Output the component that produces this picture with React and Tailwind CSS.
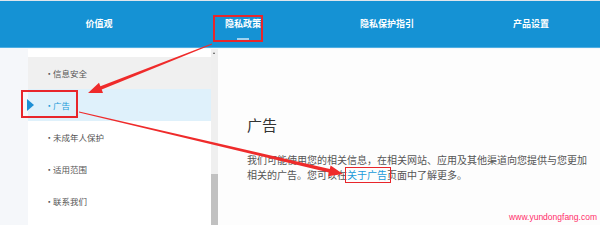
import React from 'react';

const navItems = ['价值观', '隐私政策', '隐私保护指引', '产品设置'];

const sideItems = [
  { label: '信息安全', tone: 'gray' },
  { label: '广告', tone: 'active' },
  { label: '未成年人保护' },
  { label: '适用范围' },
  { label: '联系我们' },
];

// tapered annotation arrow, thin at the start and thick near the head
const arrowPoints = (x1, y1, x2, y2, w0 = 0.4, w1 = 1.8, hl = 14, hw = 5.5) => {
  const dx = x2 - x1;
  const dy = y2 - y1;
  const len = Math.hypot(dx, dy);
  const ux = dx / len;
  const uy = dy / len;
  const px = -uy;
  const py = ux;
  const bx = x2 - ux * hl;
  const by = y2 - uy * hl;
  const pts = [
    [x1 + px * w0, y1 + py * w0],
    [bx + px * w1, by + py * w1],
    [bx + px * hw, by + py * hw],
    [x2, y2],
    [bx - px * hw, by - py * hw],
    [bx - px * w1, by - py * w1],
    [x1 - px * w0, y1 - py * w0],
  ];
  return pts.map(p => p.map(v => v.toFixed(1)).join(',')).join(' ');
};

const App = () => {
  return (
    <div className="relative w-[600px] h-[225px] overflow-hidden bg-[#f5f7fa] font-['Noto_Sans_CJK_SC',sans-serif]">
      {/* Header */}
      <div className="h-px bg-[#dfe5ec]" />
      <header className="h-[47px] bg-[#1592d4] border-b border-[#4eaee2] pl-[27px]">
        <nav className="grid grid-cols-[repeat(4,144px)] h-full">
          {navItems.map((item, i) => (
            <div key={item} className="relative flex items-center justify-center pb-[1px]">
              <span className="text-[9px] font-bold text-white leading-none">{item}</span>
              {i === 1 && (
                <>
                  <span className="absolute left-1/2 -translate-x-1/2 top-[37px] w-[12px] h-[1.5px] bg-[#9fd3f0]" />
                  {/* annotation box */}
                  <span className="absolute left-[42px] top-[14px] w-[50px] h-[27px] border-2 border-[#e8262b]" />
                </>
              )}
            </div>
          ))}
        </nav>
      </header>

      <div className="flex mt-px">
        {/* Sidebar */}
        <div className="relative ml-[28px] flex w-[190px] h-[176px] bg-white">
          <div className="relative w-[183px]">
            <div className="h-[8px]" />
            {sideItems.map(item => (
              <div
                key={item.label}
                className={
                  'relative flex items-center h-[32px] pl-[17px] text-[8.5px] ' +
                  (item.tone === 'gray'
                    ? 'bg-[#f0f0f0] text-[#555]'
                    : item.tone === 'active'
                    ? 'bg-[#dff1fb] text-[#1a9ad9]'
                    : 'text-[#555]')
                }
              >
                {item.tone === 'active' && (
                  <>
                    <span className="absolute -left-px top-[10px] w-0 h-0 border-t-[6px] border-b-[6px] border-l-[7px] border-t-transparent border-b-transparent border-l-[#1d8fd5]" />
                    <span className="absolute -left-[7px] top-px w-[57px] h-[28px] border-2 border-[#e8262b]" />
                  </>
                )}
                <span className="w-[8px]">·</span>
                <span>{item.label}</span>
              </div>
            ))}
          </div>
          {/* scrollbar */}
          <div className="relative w-[7px] bg-[#efefef]">
            <span className="absolute left-[2px] top-[3px] w-0 h-0 border-l-[1.5px] border-r-[1.5px] border-b-[2px] border-l-transparent border-r-transparent border-b-[#555]" />
            <div className="absolute left-0 right-0 top-[125px] bottom-0 bg-[#c1c1c1]" />
          </div>
        </div>

        {/* Main */}
        <main className="flex-1 bg-[#fdfdfd] pl-[29px] pt-[66px]">
          <h1 className="text-[15px] leading-[20px] text-[#333]">广告</h1>
          <p className="mt-[17px] w-[340px] text-[10px] leading-[15px] text-[#555]">
            我们可能使用您的相关信息，在相关网站、应用及其他渠道向您提供与您更加相关的广告。您可以在
            <span className="relative text-[#1a9ad9]">
              关于广告
              <span className="absolute -left-[2px] -right-[4px] top-0 bottom-[-1px] border-[1.5px] border-[#e8262b]" />
            </span>
            页面中了解更多。
          </p>
        </main>
      </div>

      <svg className="absolute inset-0 pointer-events-none" width="600" height="225">
        <polygon points={arrowPoints(212, 44, 88, 93)} fill="#ef2b2b" />
        <polygon points={arrowPoints(79, 112, 343, 174)} fill="#ef2b2b" />
      </svg>

      <span className="absolute right-[3px] bottom-[2px] text-[8.5px] leading-[12px] text-[#ff2d6a] font-['Liberation_Sans',sans-serif]">
        www.yundongfang.com
      </span>
    </div>
  );
};

export default App;
